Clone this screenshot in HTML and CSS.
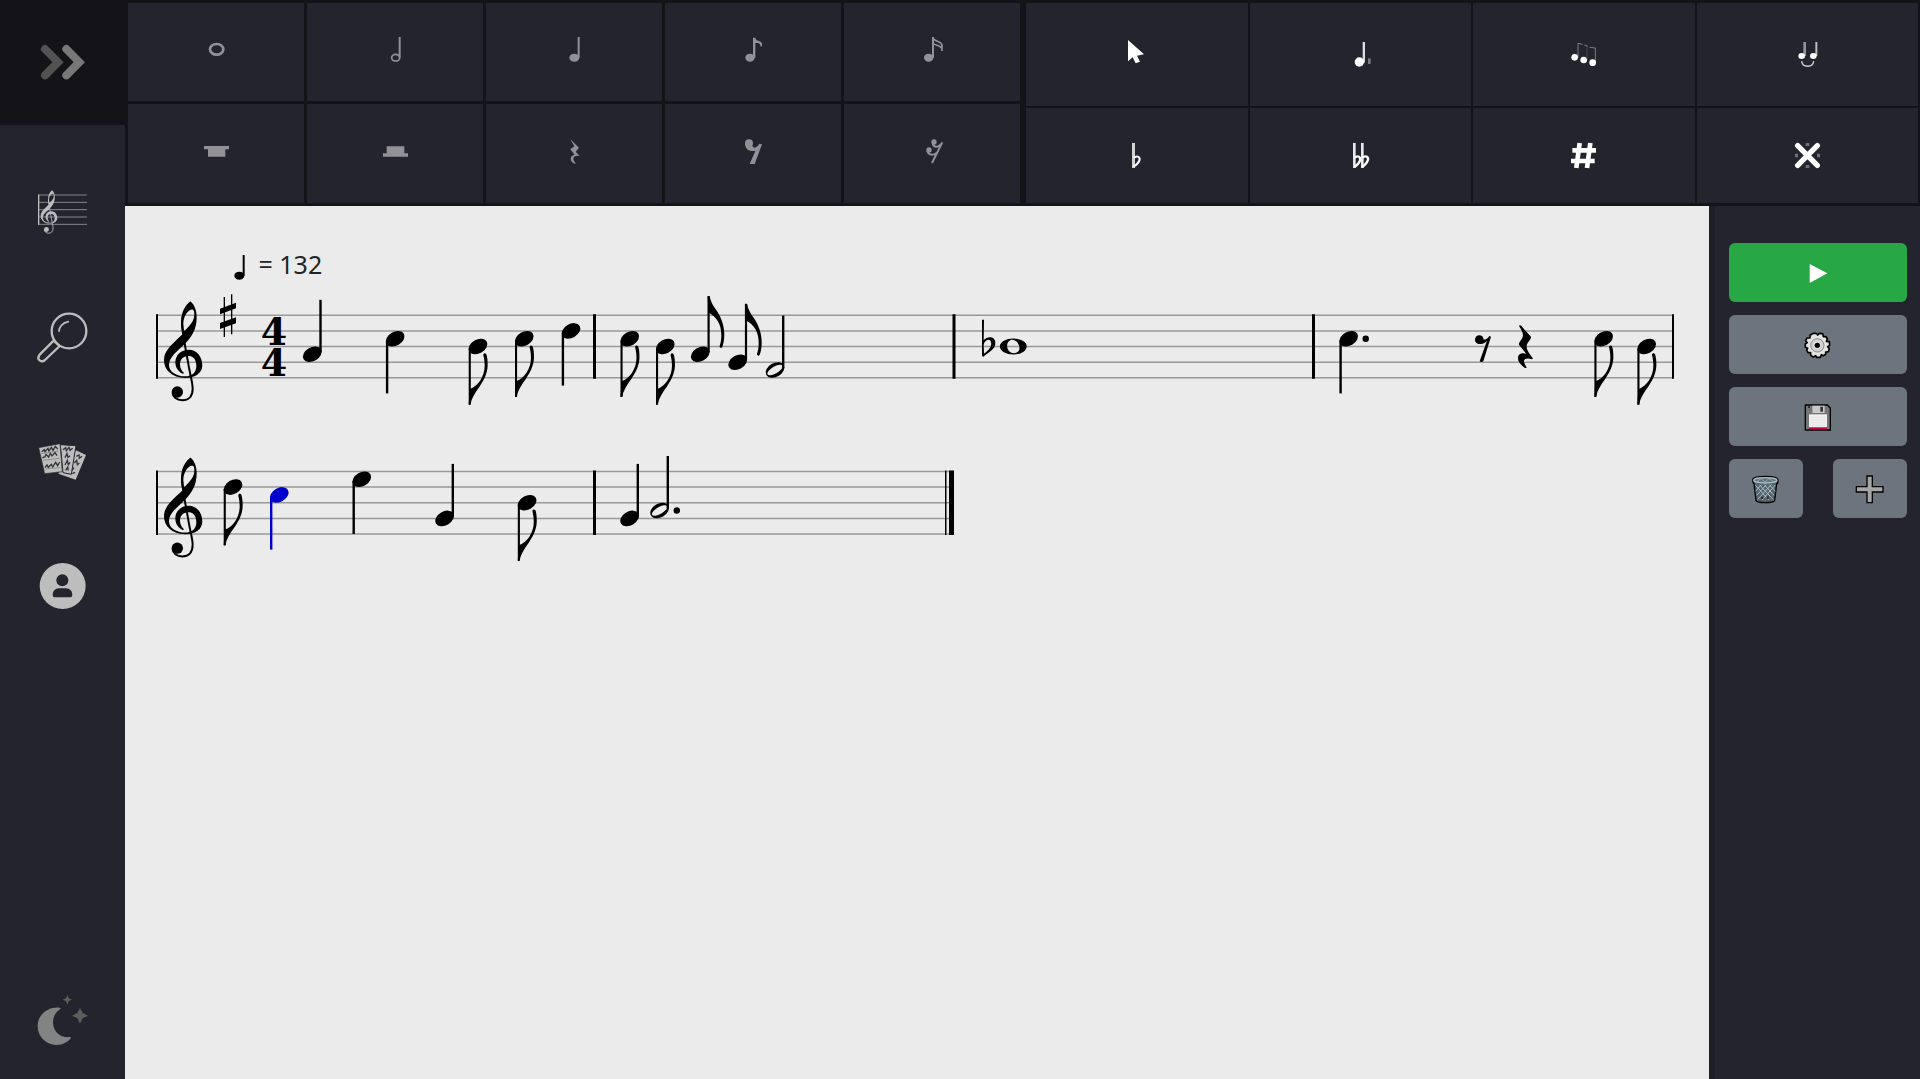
FILE: index.html
```html
<!DOCTYPE html>
<html lang="en">
<head>
  <meta charset="UTF-8">
  <meta name="viewport" content="width=device-width, initial-scale=1">
  <title>Score editor</title>
  <link rel="stylesheet" href="styles.css">
</head>
<body>
  <!-- Shared music glyphs -->
  <svg class="defs" width="0" height="0" aria-hidden="true">
    <defs>
      <g id="clef" transform="scale(.3333) translate(-492 -454)">
        <path fill="currentColor" fill-rule="evenodd" d="M571 412C584 422 591 442 590 464C589 493 577 517 557 537C534 560 507 578 507 603C507 624 530 637 555 637C577 637 589 624 589 606C589 588 581 577 567 576C549 575 540 587 540 601C540 614 546 622 552 627C551 630 548 630 545 628C532 620 526 608 526 595C526 572 544 557 566 557C592 557 607 580 607 604C607 627 586 642 556 642C515 642 492 617 492 588C492 562 512 545 530 527Q540 518 548 510C545 500 543 490 543 474C543 446 556 424 571 412ZM579 437C566 434 550 455 550 480C550 487 551 494 552 501C568 488 583 470 583 452C583 444 582 439 579 437Z"/>
        <path fill="none" stroke="currentColor" stroke-width="6" d="M546 478C547 505 557 556 564 594C569 628 578 655 578 674C578 699 564 709 547 709C530 709 518 699 518 686"/>
        <circle cx="532" cy="684" r="17" fill="currentColor"/>
      </g>
      <ellipse id="head" rx="10" ry="6.9" transform="rotate(-30)"/>
      <g id="q-up">
        <use href="#head"/>
        <path d="M7 -54.5H9.4V-2H7Z"/>
      </g>
      <g id="q-down">
        <use href="#head"/>
        <path d="M-9.3 2H-6.9V54.7H-9.3Z"/>
      </g>
      <g id="e-down">
        <use href="#head"/>
        <path d="M-9.3 2H-7.2V58H-9.3Z"/>
        <path transform="scale(.3333)" d="M-28 175H-23C-19 155-10 140 5 120C22 95 29 75 29 55C29 42 28 32 25 23C22 18 15 20 16 26C19 38 20 48 20 58C20 90 0 120-25 128Z"/>
      </g>
      <g id="e-up">
        <use href="#head"/>
        <path d="M7.2 -58H9.4V-2H7.2Z"/>
        <path transform="scale(.3333)" d="M22-175H28C31-158 38-146 50-130C64-108 72-85 72-60C72-45 70-32 66-22C63-17 57-20 58-25C62-35 63-48 63-58C63-90 50-112 25-125Z"/>
      </g>
      <g id="h-up">
        <path fill-rule="evenodd" transform="rotate(-30)" d="M-10 0A10 6.9 0 1 0 10 0A10 6.9 0 1 0-10 0ZM-8.7 0A8.7 3.4 0 1 1 8.7 0A8.7 3.4 0 1 1-8.7 0Z"/>
        <path d="M7 -54.5H9.4V-2H7Z"/>
      </g>
      <g id="quarter">
        <ellipse cx="37" cy="62" rx="15" ry="12"/>
        <path d="M47 0H53V62H47Z"/>
      </g>
    </defs>
  </svg>

  <nav class="sidebar">
    <button class="toggle" aria-label="Expand menu">
      <svg viewBox="0 0 150 150" fill="none" stroke-width="24" stroke-linecap="round">
        <path stroke="#525252" d="M24 36L63 75.500L24 115"/>
        <path stroke="#787878" d="M88 36L127 75.500L88 115"/>
      </svg>
    </button>
    <a href="#" aria-label="Compose">
      <svg viewBox="0 0 150 150">
        <path stroke="#85858a" stroke-width="3" d="M3 24H149M3 46H150M3 68H150M3 90H150M3 112H150"/>
        <path stroke="#bdbdbd" stroke-width="4" d="M5 23V113"/>
        <use href="#clef" transform="translate(11 28) scale(1.3)"/>
      </svg>
    </a>
    <a href="#" aria-label="Search">
      <svg viewBox="0 0 150 150" fill="none" stroke="#bdbdbd" stroke-width="7">
        <circle cx="96" cy="57" r="52"/>
        <path stroke-linejoin="round" d="M50 86L8 128Q0 138 8 145Q16 151 24 144L68 102Z"/>
        <path stroke-width="5" stroke-linecap="round" d="M66 58C66 44 78 32 94 29"/>
      </svg>
    </a>
    <a href="#" aria-label="My scores">
      <svg viewBox="0 0 150 150">
        <g fill="#bdbdbd">
          <path d="M117 40L147 54L116 128L64 110Z"/>
          <path stroke="#24242e" stroke-width="3" d="M70 23L117 26L103 112L78 107Z"/>
          <path stroke="#24242e" stroke-width="2" d="M5 32L69 20L76 104L23 110Z"/>
        </g>
        <g fill="none" stroke="#33333a" stroke-width="4">
          <path d="M14 44L22 38L24 44L33 34L36 42L43 31L48 40L55 28L62 36M16 62L24 60L27 52L35 60L40 49L45 57L54 47L60 56M24 92L30 84L34 91L43 82L47 90L56 76L62 86L68 75"/>
          <path d="M78 38L86 32L88 41L96 31L99 40L107 34M84 62L90 50L93 61L99 56M84 84L91 70L94 83L99 76M86 100L92 90L94 101"/>
          <path d="M118 58L126 54L127 64L135 58M112 78L119 70L121 83L127 78M105 100L111 92M106 110L114 106"/>
        </g>
        <path stroke="#77777b" stroke-width="2" d="M14 50L64 42M18 70L66 64M23 96L70 92"/>
      </svg>
    </a>
    <a href="#" aria-label="Account">
      <svg viewBox="0 0 150 150">
        <circle cx="77" cy="72" r="69" fill="#bdbdbd"/>
        <circle cx="76" cy="55" r="18" fill="#24242e"/>
        <path fill="#24242e" d="M66 79H87C99 79 106 89 106 99Q106 106 100 106H53Q47 106 47 99C47 89 54 79 66 79Z"/>
      </svg>
    </a>
    <button class="theme" aria-label="Dark mode">
      <svg viewBox="0 0 150 150">
        <path fill="#838383" d="M67 38C50 34 2 46 2 94C2 126 28 150 58 150C78 150 94 140 102 129Q102 126 98 126C68 130 48 108 48 82C48 64 57 50 70 42Q73 39 67 38Z"/>
        <path fill="#5d5d5d" d="M91 0L95 10L105 14L95 18L91 29L87 18L77 14L87 10ZM129 38L137 54L153 62L137 70L129 86L121 70L105 62L121 54Z"/>
      </svg>
    </button>
  </nav>

  <main>
    <header class="toolbars">
      <div class="toolbar durations">
        <button aria-label="Whole note"><svg viewBox="0 0 75 75"><ellipse cx="38" cy="37" rx="20" ry="16" fill="none" stroke="currentColor" stroke-width="8"/></svg></button>
        <button aria-label="Half note"><svg viewBox="0 0 75 75"><ellipse cx="38" cy="62" rx="12" ry="10" fill="none" stroke="currentColor" stroke-width="5"/><path d="M47 0H53V62H47Z"/></svg></button>
        <button aria-label="Quarter note"><svg viewBox="0 0 75 75"><use href="#quarter"/></svg></button>
        <button aria-label="Eighth note"><svg viewBox="0 0 75 75"><ellipse cx="27" cy="62" rx="14" ry="12"/><path d="M36 2H43C44 10 50 10 56 13C63 16 66 22 61 29C58 30 58 26 58 24C57 19 51 18 43 18V62H36Z"/></svg></button>
        <button aria-label="Sixteenth note"><svg viewBox="0 0 75 75"><ellipse cx="26" cy="62" rx="14" ry="12"/><path d="M36 0H42V62H36Z"/><path fill="none" stroke="currentColor" stroke-width="5" d="M40 5C46 14 64 12 66 24V42M40 20C48 26 62 24 65 34"/></svg></button>
        <button aria-label="Whole rest"><svg viewBox="0 0 75 75"><path d="M0 21H75V31H64V53H12V31H0Z"/></svg></button>
        <button aria-label="Half rest"><svg viewBox="0 0 75 75"><path d="M11 22H64V43H75V53H0V43H11Z"/></svg></button>
        <button aria-label="Quarter rest"><svg viewBox="0 0 75 75"><path d="M25 1L51 26L41 38L53 51C43 48 34 51 34 60C34 66 40 70 41 75C30 72 24 64 27 55C29 50 36 48 38 47L25 31L37 22Z"/></svg></button>
        <button aria-label="Eighth rest"><svg viewBox="0 0 75 75"><circle cx="24" cy="13" r="12"/><path d="M12 14C14 32 26 38 43 36L26 75H41L63 16L55 14C48 26 38 30 34 20Z"/></svg></button>
        <button aria-label="Sixteenth rest"><svg viewBox="0 0 75 75"><circle cx="42" cy="9" r="8"/><circle cx="27" cy="33" r="8"/><path fill="none" stroke="currentColor" stroke-width="6" d="M67 10L36 72M38 12C40 26 55 27 65 14M22 35C26 50 42 50 52 40"/></svg></button>
      </div>
      <div class="toolbar tools">
        <button aria-label="Select"><svg viewBox="0 0 75 75"><path d="M12-6V58L26 46L35 64L48 59L39 41L60 37Z"/></svg></button>
        <button aria-label="Dot"><svg viewBox="0 0 75 75"><ellipse cx="34" cy="60" rx="14" ry="14"/><path d="M44 0H51V62H44Z" opacity=".85"/><path d="M60 49H68V66H60Z" opacity=".4"/></svg></button>
        <button aria-label="Tuplet"><svg viewBox="0 0 75 75"><circle cx="11" cy="46" r="10"/><circle cx="38" cy="54" r="10"/><circle cx="65" cy="62" r="10"/><path d="M21 46V4L35 7M40 9L50 12M56 16L73 18V60" fill="none" stroke="currentColor" stroke-width="3" opacity=".4"/><path d="M48 12V54" stroke="currentColor" stroke-width="3" opacity=".15"/></svg></button>
        <button aria-label="Tie"><svg viewBox="0 0 75 75"><ellipse cx="20" cy="42" rx="10" ry="9"/><ellipse cx="55" cy="42" rx="10" ry="9"/><path d="M25 0H33V42H25Z" opacity=".5"/><path d="M61 0H67V42H61Z" opacity=".7"/><path fill="none" stroke="currentColor" stroke-width="4" opacity=".8" d="M20 57C22 78 54 78 56 57"/></svg></button>
        <button aria-label="Flat"><svg viewBox="0 0 75 75"><path d="M24 0H33V75H24Z" opacity=".8"/><path fill="none" stroke="currentColor" stroke-width="6" d="M30 44C40 36 50 42 46 53Q43 62 29 71"/></svg></button>
        <button aria-label="Double flat"><svg viewBox="0 0 75 75"><path d="M15 0H23V75H15ZM39 0H47V75H39Z" opacity=".9"/><path fill="none" stroke="currentColor" stroke-width="7" d="M20 44C30 36 39 42 36 53Q32 64 19 72M43 44C53 36 64 42 59 53Q55 64 42 72"/></svg></button>
        <button aria-label="Sharp"><svg viewBox="0 0 75 75"><path fill="none" stroke="currentColor" stroke-width="14" d="M26 0L16 75M58 0L48 75M4 22H75M0 54H71"/></svg></button>
        <button aria-label="Double sharp"><svg viewBox="0 0 75 75"><path stroke="currentColor" stroke-width="16" stroke-linecap="round" d="M8 8L67 67M67 8L8 67"/><path opacity=".35" d="M32 0H43V9H32ZM32 66H43V75H32ZM0 32H9V43H0ZM66 32H75V43H66Z"/></svg></button>
      </div>
    </header>

    <div class="workspace">
      <section class="sheet">
        <p class="tempo"><svg viewBox="0 0 75 75"><use href="#quarter"/></svg> = 132</p>

        <svg class="score" viewBox="0 0 1584 300">
          <g transform="translate(0 33.300)">
            <path class="lines" d="M32 0H1548M32 15.600H1548M32 31.200H1548M32 46.900H1548M32 62.500H1548"/>
            <path d="M31-1H33V63.500H31ZM468-1H471V63.500H468ZM827.500-1H830.500V63.500H827.500ZM1187-1H1190V63.500H1187ZM1547-1H1549V63.500H1547Z"/>
            <use href="#clef" transform="translate(39 0)"/>
            <!-- key signature -->
            <path transform="translate(95 -21) scale(.3333)" d="M11 8H15V128H11ZM33 0H37V120H33ZM0 43L48 25V42L0 60ZM0 86L48 69V87L0 104Z"/>
            <text class="time" x="149" y="30">4</text>
            <text class="time" x="149" y="61">4</text>
            <use href="#q-up" x="187.300" y="39"/>
            <use href="#q-down" x="270.200" y="23.400"/>
            <use href="#e-down" x="353" y="31.200"/>
            <use href="#e-down" x="399.300" y="23.400"/>
            <use href="#q-down" x="446" y="15.600"/>
            <use href="#e-down" x="504.800" y="23.400"/>
            <use href="#e-down" x="540.300" y="31.200"/>
            <use href="#e-up" x="575.300" y="39"/>
            <use href="#e-up" x="612.700" y="46.900"/>
            <use href="#h-up" x="650" y="54.700"/>
            <!-- B flat whole note -->
            <path transform="translate(857 4) scale(.3333)" fill-rule="evenodd" d="M0 2Q3-1 6 2L5 63C16 50 40 50 40 71C40 90 20 98 4 112L0 110ZM5 76L6 103C22 92 30 80 27 68C24 56 8 62 5 76Z"/>
            <path transform="translate(888.300 31.200)" fill-rule="evenodd" d="M-13.400 0A13.400 8 0 1 0 13.400 0A13.400 8 0 1 0-13.400 0ZM-3-6.300C-8-4 -7 5 -1 6.500C5 7.500 7.500 3 5.500-1.500C4-5.500 0-7.500-3-6.300Z"/>
            <use href="#q-down" x="1223.700" y="23.400"/>
            <circle cx="1240.700" cy="23.400" r="3.200"/>
            <!-- rests -->
            <g transform="translate(1175 0) scale(.3333) translate(0 -76)">
              <circle cx="538" cy="149" r="13"/>
              <path d="M535 161C548 164 556 158 561 152L539 214Q545 218 550 214L573 140L568 138C564 146 556 150 548 149Z"/>
              <path d="M657 108Q659 104 664 107C672 118 684 130 693 140C695 148 680 158 680 168C680 182 690 194 699 205L696 208C682 202 668 206 673 218C675 225 679 229 680 233Q677 235 674 233C664 226 654 216 654 205C653 192 665 186 679 192L657 164C656 157 669 146 669 136C669 126 662 116 657 108Z"/>
            </g>
            <use href="#e-down" x="1478.700" y="23.400"/>
            <use href="#e-down" x="1521.700" y="31.200"/>
          </g>

          <g transform="translate(0 189.500)">
            <path class="lines" d="M32 0H829M32 15.600H829M32 31.200H829M32 46.900H829M32 62.500H829"/>
            <path d="M31-1H33V63.500H31ZM468-1H471V63.500H468ZM820-1H821.500V63.500H820ZM824-1H829V63.500H824Z"/>
            <use href="#clef" transform="translate(39 0)"/>
            <use href="#e-down" x="108" y="15.600"/>
            <use class="selected" href="#q-down" x="154.300" y="23.400"/>
            <use href="#q-down" x="236.800" y="7.800"/>
            <use href="#q-up" x="319.600" y="46.900"/>
            <use href="#e-down" x="402.100" y="31.200"/>
            <use href="#q-up" x="504.600" y="46.900"/>
            <use href="#h-up" x="534.600" y="39"/>
            <circle cx="551.800" cy="39" r="3.200"/>
          </g>
        </svg>
      </section>

      <aside class="panel">
        <button class="btn play" aria-label="Play"><svg viewBox="0 0 81 81"><path fill="#fff" d="M17 12L70 40L17 69Z"/></svg></button>
        <button class="btn" aria-label="Settings">
          <svg viewBox="0 0 81 81">
            <path fill="#e4e4e4" stroke="#000" stroke-width="5" stroke-linejoin="round" d="M28 4L37 4L41 9L46 4L56 5L58 14L66 14L70 21L67 28L76 29L77 40L71 44L76 50L73 59L65 60L65 67L58 71L52 68L49 76L38 76L35 71L28 75L20 70L20 62L12 62L8 54L11 49L4 46L4 36L10 32L5 26L9 18L18 18L18 10Z"/>
            <circle cx="40" cy="40" r="20" fill="#cfcfcf" stroke="#8b8b8b" stroke-width="3"/>
            <circle cx="40" cy="40" r="12" fill="#ddd"/>
            <circle cx="40" cy="40" r="8"/>
          </svg>
        </button>
        <button class="btn" aria-label="Save">
          <svg viewBox="0 0 81 81">
            <path fill="#757575" stroke="#000" stroke-width="4" d="M4 3H70L79 12V78H4Z"/>
            <path fill="#c8c8c8" d="M25 5H62V27H25Z"/>
            <path fill="#333" d="M49 8H57V23H49ZM12 6H18V12H12Z"/>
            <path fill="#f1f1f1" d="M15 31H69V71H15Z"/>
            <path stroke="#dadada" stroke-width="2" d="M19 40H65M19 48H65M19 56H65M19 64H65"/>
            <path fill="#c4004f" d="M15 70H69V76H15Z"/>
          </svg>
        </button>
        <div class="row">
          <button class="btn" aria-label="Delete">
            <svg viewBox="0 0 81 81">
              <path fill="#55636b" stroke="#000" stroke-width="4" d="M2 11C2 -2 78 -2 78 11L77 22H74L68 74C64 82 17 82 12 74L6 22H4Z"/>
              <path fill="none" stroke="#a9bdc6" stroke-width="3" d="M10 27L50 72M22 26L63 70M37 26L66 58M52 26L70 46M70 27L30 72M58 26L17 70M43 26L14 58M28 26L11 46"/>
              <ellipse cx="40" cy="13" rx="35" ry="8" fill="#60727b" stroke="#a9bdc6" stroke-width="4"/>
              <path fill="none" stroke="#a9bdc6" stroke-width="2" d="M15 16L27 8L39 18L51 8L64 16"/>
              <path fill="#222" d="M28 62H34V68H28ZM44 62H50V68H44Z"/>
            </svg>
          </button>
          <button class="btn" aria-label="Add">
            <svg viewBox="0 0 81 81"><path fill="#a6a6a6" stroke="#000" stroke-width="4" d="M33 0H49V32H81V48H49V80H33V48H1V32H33Z"/></svg>
          </button>
        </div>
      </aside>
    </div>
  </main>
</body>
</html>
```

FILE: styles.css
```css
* { box-sizing: border-box; }
body { margin: 0; min-height: 100vh; display: grid; grid-template-columns: 125px 1fr;
  font-family: "Noto Sans", "Open Sans", sans-serif; color: #212529; background-color: #24242e; }
button { border: none; padding: 0; background: none; cursor: pointer; }
svg { display: block; overflow: visible; }
.defs { position: absolute; }

/* Sidebar */
.sidebar { display: flex; flex-direction: column; background-color: #24242e; }
.sidebar a, .sidebar button { height: 125px; padding: 0 1px 1px 0; display: flex;
  align-items: center; justify-content: center; color: #bdbdbd; }
.sidebar svg { width: 50px; height: 50px; }
.sidebar .toggle { background-color: #141418; margin-bottom: 25px; }
.sidebar .theme { height: 118px; margin-top: auto; }

main { display: flex; flex-direction: column; min-width: 0; }

/* Note and tool buttons */
.toolbars { display: grid; grid-template-columns: 898fr 897fr; height: 206px; background-color: #141418; }
.toolbar { display: grid; }
.toolbar button { display: flex; align-items: center; justify-content: center; background-color: #24242e; color: #fff; }
.toolbar button:hover { background-color: #30303c; }
.toolbar svg { width: 25px; height: 25px; fill: currentColor; }
.durations { grid-template-columns: repeat(5, 1fr); grid-template-rows: 98fr 99fr; gap: 3px; padding: 3px; }
.durations button { color: #929196; padding-bottom: 5px; }
.tools { grid-template-columns: repeat(4, 1fr); grid-template-rows: 103fr 95fr; gap: 2px; padding: 3px 2px 3px 3px; }

/* Sheet */
.workspace { flex: 1; display: flex; }
.sheet { flex: 1; min-width: 0; background-color: #ebebeb; padding-top: 40px; }
.tempo { margin: 0; padding-left: 102px; font-size: 25px; line-height: 36px; height: 36px; }
.tempo svg { display: inline-block; width: 25px; height: 25px; vertical-align: middle; fill: #000; }
.score { width: 100%; color: #000; fill: #000; }
.lines { fill: none; stroke: #999; stroke-width: 1.5; }
.time { font: bold 38px "DejaVu Serif", serif; text-anchor: middle; }
.selected { fill: #0000cc; }

/* Actions */
.panel { width: 211px; padding: 37px 13px 0 14px; border-left: 6px solid #1f1f25;
  display: flex; flex-direction: column; gap: 13px; }
.btn { height: 59px; padding: 1px 2px 0 0; display: flex; align-items: center; justify-content: center;
  border-radius: 6px; background-color: #6c757d; }
.btn:hover { background-color: #5a6268; }
.btn svg { width: 27px; height: 27px; }
.play { background-color: #28a745; }
.play:hover { background-color: #218838; }
.row { display: flex; justify-content: space-between; }
.row .btn { width: 74px; }
```
